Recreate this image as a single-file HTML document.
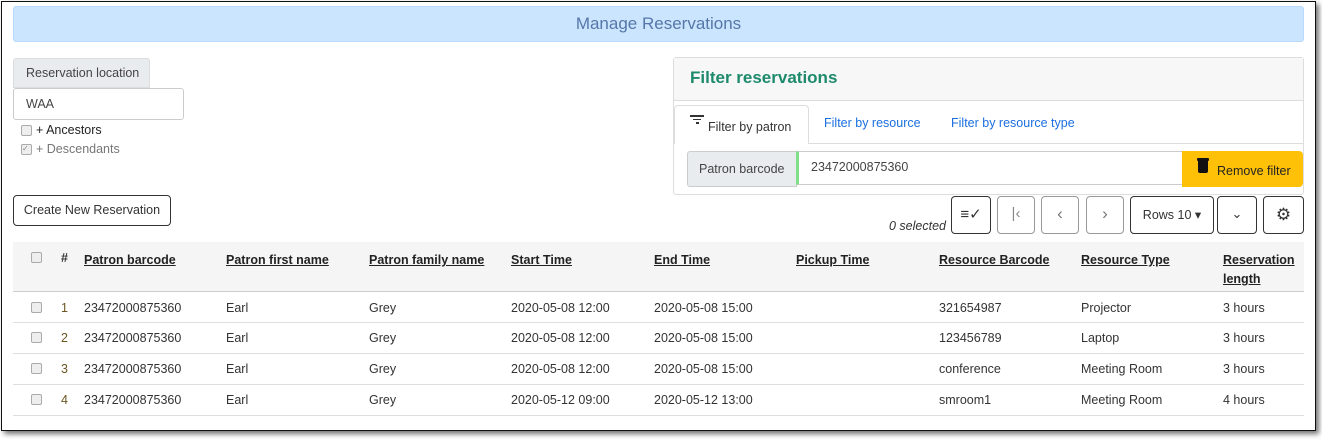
<!DOCTYPE html>
<html><head><style>
*{box-sizing:border-box;margin:0;padding:0}
body{width:1322px;height:439px;background:#fff;font-family:"Liberation Sans",sans-serif;font-size:12.5px;color:#333;position:relative;overflow:hidden}
.a{position:absolute}
.frame{left:1px;top:1px;width:1315px;height:430px;border:1.5px solid #111;box-shadow:3px 3px 5px rgba(0,0,0,.55)}
.hdr{left:13px;top:6px;width:1291px;height:36px;background:#cce5ff;border:1px solid #b8daff;border-radius:3px;text-align:center;line-height:34px;font-size:17px;color:#5577a8;font-weight:300}
.btn{border:1px solid #333;border-radius:4px;background:#fff;text-align:center}
.th{font-weight:bold;text-decoration:underline;color:#222;font-size:12.5px}
.ln{left:13px;width:1291px;height:1px;background:#dedede}
.cb{width:11px;height:11px;border:1px solid #aaa;border-radius:2px;background:#eee}
</style></head><body>
<div class="a frame"></div>
<div class="a hdr">Manage Reservations</div>

<div class="a" style="left:13px;top:58px;width:137px;height:30px;background:#e9ecef;border:1px solid #ddd;border-radius:3px 3px 0 0;line-height:29px;padding-left:12px;font-size:12.5px;color:#444">Reservation location</div>
<div class="a" style="left:13px;top:88px;width:171px;height:32px;border:1px solid #ccc;border-radius:3px;line-height:30px;padding-left:12px;color:#444">WAA</div>
<div class="a cb" style="left:21px;top:125px"></div>
<div class="a" style="left:36px;top:123px;font-size:12.5px;color:#222">+ Ancestors</div>
<div class="a cb" style="left:21px;top:144px;font-size:8px;line-height:8px;color:#888">✓</div>
<div class="a" style="left:36px;top:142px;font-size:12.5px;color:#777">+ Descendants</div>
<div class="a btn" style="left:13px;top:195px;width:158px;height:31px;line-height:29px;font-size:12.5px">Create New Reservation</div>

<div class="a" style="left:673px;top:57px;width:631px;height:138px;border:1px solid #ddd;border-radius:3px"></div>
<div class="a" style="left:674px;top:58px;width:629px;height:43px;background:#f7f7f7;border-bottom:1px solid #ddd"></div>
<div class="a" style="left:690px;top:68px;font-size:17px;font-weight:bold;color:#1d8a6b">Filter reservations</div>
<div class="a" style="left:674px;top:143px;width:629px;height:1px;background:#ddd"></div>
<div class="a" style="left:674px;top:105px;width:135px;height:39px;border:1px solid #ddd;border-bottom:none;border-radius:4px 4px 0 0;background:#fff"></div>
<div class="a" style="left:690px;top:114px;width:16px;height:10px">
<div class="a" style="left:0;top:1px;width:14px;height:1.5px;background:#333"></div>
<div class="a" style="left:3px;top:4.5px;width:8px;height:1.5px;background:#333"></div>
<div class="a" style="left:5.5px;top:8px;width:3px;height:1.5px;background:#333"></div></div>
<div class="a" style="left:708px;top:120px;font-size:12.5px;color:#333">Filter by patron</div>
<div class="a" style="left:824px;top:116px;font-size:12.5px;color:#1a6fe0">Filter by resource</div>
<div class="a" style="left:951px;top:116px;font-size:12.5px;color:#1a6fe0">Filter by resource type</div>
<div class="a" style="left:687px;top:151px;width:110px;height:36px;background:#e9ecef;border:1px solid #ccc;border-radius:3px 0 0 3px;line-height:34px;padding-left:11px;font-size:12.5px;color:#444">Patron barcode</div>
<div class="a" style="left:796px;top:151px;width:387px;height:34px;border:1px solid #ccc;border-left:3px solid #7ee08a;line-height:31px;padding-left:12px;font-size:12.5px;color:#444">23472000875360</div>
<div class="a" style="left:1182px;top:151px;width:121px;height:36px;background:#ffc107;border-radius:0 4px 4px 0"></div>
<div class="a" style="left:1197px;top:158px;width:12px;height:16px"><div class="a" style="left:0;top:0;width:12px;height:3px;background:#111;border-radius:1px"></div><div class="a" style="left:1px;top:3px;width:10px;height:12px;background:#111;border-radius:0 0 2px 2px"></div></div>
<div class="a" style="left:1217px;top:164px;font-size:12.5px;color:#222">Remove filter</div>

<div class="a" style="left:889px;top:219px;font-size:12.5px;font-style:italic;color:#333">0 selected</div>
<div class="a btn" style="left:951px;top:196px;width:40px;height:38px;font-size:15px;line-height:36px">≡✓</div>
<div class="a btn" style="left:997px;top:196px;width:38px;height:38px;line-height:34px;border-color:#999;color:#888;font-size:15px">|‹</div>
<div class="a btn" style="left:1041px;top:196px;width:38px;height:38px;line-height:34px;border-color:#999;color:#777;font-size:17px">‹</div>
<div class="a btn" style="left:1086px;top:196px;width:38px;height:38px;line-height:34px;border-color:#999;color:#777;font-size:17px">›</div>
<div class="a btn" style="left:1130px;top:196px;width:84px;height:38px;line-height:36px;font-size:12.5px">Rows 10 ▾</div>
<div class="a btn" style="left:1217px;top:196px;width:40px;height:38px;line-height:34px;font-size:13px">⌄</div>
<div class="a btn" style="left:1263px;top:196px;width:41px;height:38px;line-height:35px;font-size:17px">⚙</div>

<div class="a" style="left:13px;top:242px;width:1291px;height:49px;background:#f5f5f5"></div>
<div class="a ln" style="top:291px;background:#ccc"></div>
<div class="a cb" style="left:31px;top:252px"></div>
<div class="a" style="left:61px;top:251px;font-weight:bold">#</div>
<div class="a th" style="left:84px;top:253px">Patron barcode</div>
<div class="a th" style="left:226px;top:253px">Patron first name</div>
<div class="a th" style="left:369px;top:253px">Patron family name</div>
<div class="a th" style="left:511px;top:253px">Start Time</div>
<div class="a th" style="left:654px;top:253px">End Time</div>
<div class="a th" style="left:796px;top:253px">Pickup Time</div>
<div class="a th" style="left:939px;top:253px">Resource Barcode</div>
<div class="a th" style="left:1081px;top:253px">Resource Type</div>
<div class="a th" style="left:1223px;top:251px;line-height:19px">Reservation<br>length</div>

<div class="a ln" style="top:322px"></div>
<div class="a ln" style="top:353px"></div>
<div class="a ln" style="top:384px"></div>
<div class="a ln" style="top:415px"></div>

<div class="a" style="left:0;top:301px;width:1322px">
<div class="a cb" style="left:31px;top:1px"></div><div class="a" style="left:61px;color:#6b5620">1</div><div class="a" style="left:84px">23472000875360</div><div class="a" style="left:226px">Earl</div><div class="a" style="left:369px">Grey</div><div class="a" style="left:511px">2020-05-08 12:00</div><div class="a" style="left:654px">2020-05-08 15:00</div><div class="a" style="left:939px">321654987</div><div class="a" style="left:1081px">Projector</div><div class="a" style="left:1223px">3 hours</div></div>
<div class="a" style="left:0;top:331px;width:1322px">
<div class="a cb" style="left:31px;top:1px"></div><div class="a" style="left:61px;color:#6b5620">2</div><div class="a" style="left:84px">23472000875360</div><div class="a" style="left:226px">Earl</div><div class="a" style="left:369px">Grey</div><div class="a" style="left:511px">2020-05-08 12:00</div><div class="a" style="left:654px">2020-05-08 15:00</div><div class="a" style="left:939px">123456789</div><div class="a" style="left:1081px">Laptop</div><div class="a" style="left:1223px">3 hours</div></div>
<div class="a" style="left:0;top:362px;width:1322px">
<div class="a cb" style="left:31px;top:1px"></div><div class="a" style="left:61px;color:#6b5620">3</div><div class="a" style="left:84px">23472000875360</div><div class="a" style="left:226px">Earl</div><div class="a" style="left:369px">Grey</div><div class="a" style="left:511px">2020-05-08 12:00</div><div class="a" style="left:654px">2020-05-08 15:00</div><div class="a" style="left:939px">conference</div><div class="a" style="left:1081px">Meeting Room</div><div class="a" style="left:1223px">3 hours</div></div>
<div class="a" style="left:0;top:393px;width:1322px">
<div class="a cb" style="left:31px;top:1px"></div><div class="a" style="left:61px;color:#6b5620">4</div><div class="a" style="left:84px">23472000875360</div><div class="a" style="left:226px">Earl</div><div class="a" style="left:369px">Grey</div><div class="a" style="left:511px">2020-05-12 09:00</div><div class="a" style="left:654px">2020-05-12 13:00</div><div class="a" style="left:939px">smroom1</div><div class="a" style="left:1081px">Meeting Room</div><div class="a" style="left:1223px">4 hours</div></div>
</body></html>
